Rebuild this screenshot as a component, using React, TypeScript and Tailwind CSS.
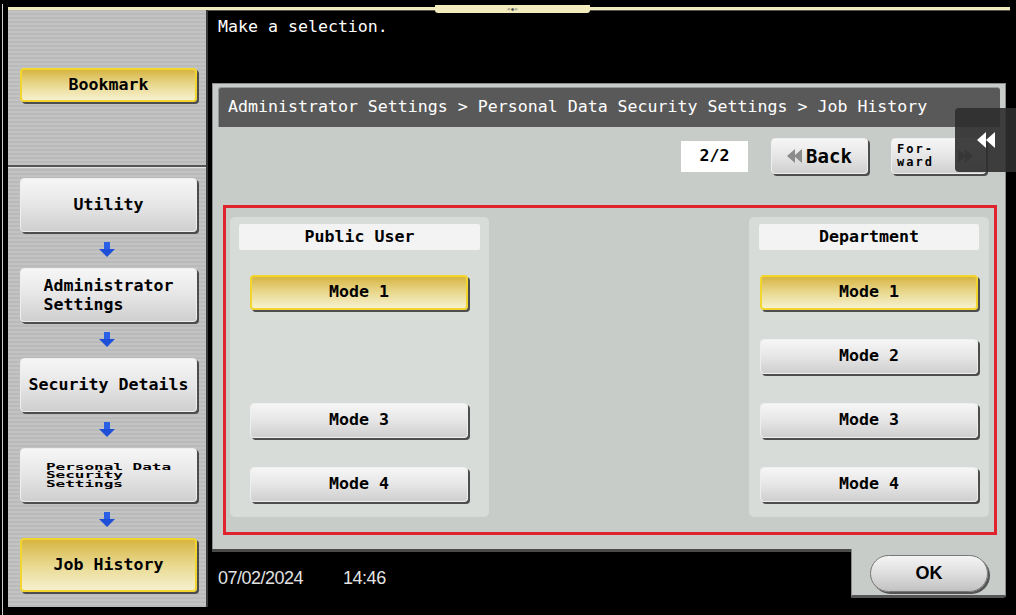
import React from "react";

const btnLight =
  "flex items-center justify-center rounded-[4px] bg-linear-to-b from-[#f6f6f6] via-[#e6e6e6] to-[#cfcfcf] border border-[#eeeeee] shadow-[2px_2px_0_#4d4d4d] text-black font-bold";
const btnYellow =
  "flex items-center justify-center rounded-[4px] bg-linear-to-b from-[#d7b540] via-[#e9d98e] to-[#f6f0cf] border-2 border-[#f2d62e] shadow-[2px_2px_0_#4d4d4d] text-black font-bold";

function DownArrow() {
  return (
    <svg width="16" height="16" viewBox="0 0 16 16">
      <rect x="5" y="0" width="6" height="7" fill="#2a5fe6" />
      <polygon points="0,7 16,7 8,15" fill="#1f4fd6" />
    </svg>
  );
}

function NavButton({ children, active }: { children: React.ReactNode; active?: boolean }) {
  return (
    <div className={`${active ? btnYellow : btnLight} mx-[12px] h-[54px] w-[177px] text-[16.6px]`}>
      {children}
    </div>
  );
}

function ArrowSlot() {
  return (
    <div className="flex h-[36px] items-center justify-center">
      <DownArrow />
    </div>
  );
}

function ModeButton({ label, active, hidden }: { label: string; active?: boolean; hidden?: boolean }) {
  if (hidden) return <div className="h-[35px]" />;
  return <div className={`${active ? btnYellow : btnLight} h-[35px] text-[16.6px]`}>{label}</div>;
}

function Group({
  title,
  width,
  headPad,
  btnPad,
  modes,
}: {
  title: string;
  width: string;
  headPad: string;
  btnPad: string;
  modes: { label: string; active?: boolean; hidden?: boolean }[];
}) {
  return (
    <div className={`${width} flex flex-col rounded-[5px] bg-[#d8dcd9] pt-[7px] pb-[14px]`}>
      <div className={headPad}>
        <div className="flex h-[26px] items-center justify-center rounded-[2px] bg-[#f3f3f3] text-[16.6px] font-bold text-black">
          {title}
        </div>
      </div>
      <div className={`${btnPad} mt-[25px] flex flex-col gap-[29px]`}>
        {modes.map((m, i) => (
          <ModeButton key={i} {...m} />
        ))}
      </div>
    </div>
  );
}

export default function App() {
  return (
    <div className="relative h-[615px] w-[1016px] overflow-hidden bg-black font-['DejaVu_Sans_Mono',monospace] text-black">
      {/* screen frame */}
      <div className="absolute left-[2px] top-[4px] bottom-0 w-px bg-[#cfcfcf]" />

      <div className="flex h-full flex-col pt-[7px] pl-[8px] pr-[6px]">
        <div className="h-[3px] bg-[#f1ebbd] shadow-[0_1px_0_#555]" />

        <div className="flex h-[597px]">
          {/* sidebar */}
          <div className="flex w-[200px] flex-col border-r-2 border-[#3a3a3a] bg-[repeating-linear-gradient(0deg,#bababa_0px,#bababa_2px,#c3c3c3_2px,#c3c3c3_4px)]">
            <div className="h-[155px] pt-[58px]">
              <div className={`${btnYellow} mx-[12px] h-[34px] w-[177px] text-[16.6px]`}>Bookmark</div>
            </div>
            <div className="h-[2px] bg-[#555] shadow-[0_1px_0_#e2e2e2]" />
            <div className="flex flex-col pt-[11px]">
              <NavButton>Utility</NavButton>
              <ArrowSlot />
              <NavButton>
                <div className="leading-[19px]">
                  Administrator
                  <br />
                  Settings
                </div>
              </NavButton>
              <ArrowSlot />
              <NavButton>Security Details</NavButton>
              <ArrowSlot />
              <NavButton>
                <div className="scale-y-[0.5] text-[16px] leading-[17px]">
                  Personal Data
                  <br />
                  Security
                  <br />
                  Settings
                </div>
              </NavButton>
              <ArrowSlot />
              <NavButton active>Job History</NavButton>
            </div>
          </div>

          {/* main */}
          <div className="flex flex-1 flex-col">
            <div className="h-[73px] pl-[10px] pt-[5px] text-[16.6px] text-white">Make a selection.</div>

            <div className="mx-[4px] flex h-[466px] flex-col border-x border-t border-[#8a8a8a] bg-[#c8ccc8] px-[5px] pt-[3px]">
              <div className="flex h-[40px] items-center rounded-t-[3px] border-l border-t border-[#9a9a9a] bg-[#595959] pl-[9px] text-[16.6px] text-white">
                Administrator Settings &gt; Personal Data Security Settings &gt; Job History
              </div>

              <div className="mt-[11px] flex h-[36px] items-center justify-end gap-[23px] pr-[14px]">
                <div className="flex h-[31px] w-[67px] items-center justify-center bg-white text-[16.6px] font-bold">
                  2/2
                </div>
                <div className={`${btnLight} h-[36px] w-[97px] gap-[3px]`}>
                  <svg width="16" height="14" viewBox="0 0 16 14">
                    <polygon points="8,0 8,14 0,7" fill="#8c8c8c" />
                    <polygon points="15,0 15,14 7,7" fill="#8c8c8c" />
                  </svg>
                  <span className="text-[19px] font-bold">Back</span>
                </div>
                <div className={`${btnLight} h-[36px] w-[95px] !justify-start pl-[5px]`}>
                  <div className="w-[44px] shrink-0 text-[12px] leading-[13px] tracking-[2px]">
                    For-
                    <br />
                    ward
                  </div>
                  <svg className="ml-[17px] shrink-0" width="16" height="14" viewBox="0 0 16 14">
                    <polygon points="0,0 0,14 8,7" fill="#8c8c8c" />
                    <polygon points="7,0 7,14 15,7" fill="#8c8c8c" />
                  </svg>
                </div>
              </div>

              <div className="mt-[31px] ml-[5px] mr-[3px] flex h-[330px] justify-between border-[3px] border-[#e1232d] pt-[9px] pl-[4px] pr-[5px] pb-[15px]">
                <Group
                  title="Public User"
                  width="w-[259px]"
                  headPad="px-[9px]"
                  btnPad="pl-[20px] pr-[21px]"
                  modes={[
                    { label: "Mode 1", active: true },
                    { label: "Mode 2", hidden: true },
                    { label: "Mode 3" },
                    { label: "Mode 4" },
                  ]}
                />
                <Group
                  title="Department"
                  width="w-[240px]"
                  headPad="px-[10px]"
                  btnPad="px-[11px]"
                  modes={[
                    { label: "Mode 1", active: true },
                    { label: "Mode 2" },
                    { label: "Mode 3" },
                    { label: "Mode 4" },
                  ]}
                />
              </div>
            </div>

            {/* footer */}
            <div className="mx-[4px] flex">
              <div className="flex h-[58px] flex-1 items-center border-t-[3px] border-[#4a4a4a] pl-[6px] pb-[3px] font-['Liberation_Sans',sans-serif] text-[18px] tracking-[-0.5px] text-[#e2e2e2]">
                <span>07/02/2024</span>
                <span className="ml-[40px]">14:46</span>
              </div>
              <div className="h-[49px] w-[155px] rounded-br-[3px] border-x border-b-[3px] border-x-[#8a8a8a] border-b-[#555] bg-[#c8ccc8] pl-[18px] pt-[6px]">
                <div className="flex h-[37px] w-[118px] items-center justify-center rounded-full border border-[#777] bg-linear-to-b from-[#f4f4f4] via-[#dedede] to-[#c2c2c2] font-['Liberation_Sans',sans-serif] text-[18px] font-bold shadow-[2px_2px_0_#555]">
                  OK
                </div>
              </div>
            </div>
          </div>
        </div>
      </div>

      {/* top tab */}
      <div className="absolute left-[435px] top-[5px] flex h-[8px] w-[155px] items-center justify-center rounded-b-[3px] bg-[#f1ebbd] text-[6px] leading-none text-[#555]">
        «◆»
      </div>

      {/* side panel handle */}
      <div className="absolute left-[955px] top-[108px] flex h-[64px] w-[61px] items-center justify-center rounded-l-[4px] bg-[#2e2e2e]/90">
        <svg width="20" height="16" viewBox="0 0 20 16">
          <polygon points="10,0 10,16 1,8" fill="#ffffff" />
          <polygon points="19,0 19,16 10,8" fill="#ffffff" />
        </svg>
      </div>
    </div>
  );
}
